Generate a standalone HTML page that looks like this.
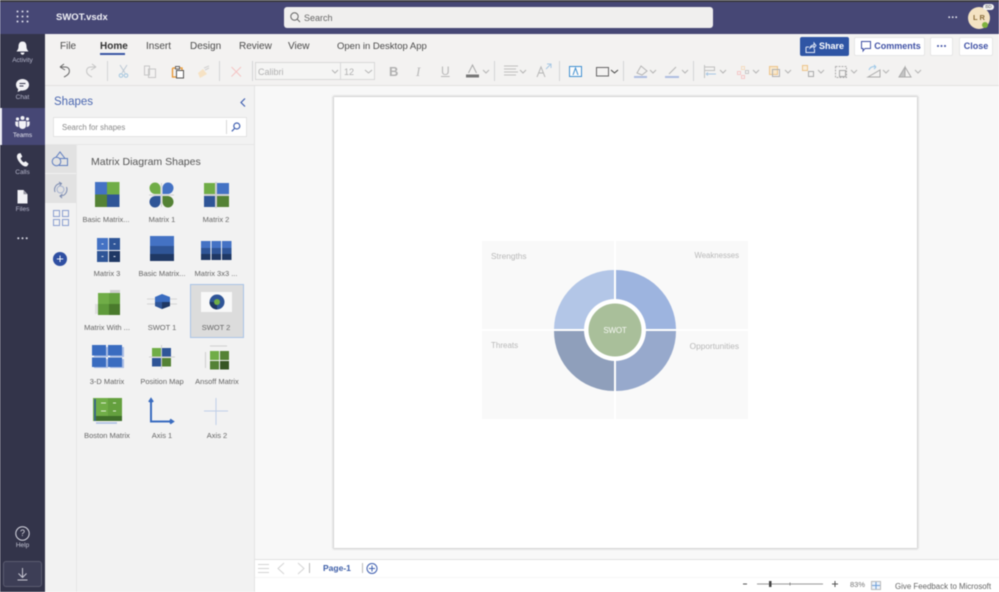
<!DOCTYPE html>
<html><head><meta charset="utf-8">
<style>
html,body{margin:0;padding:0;width:999px;height:592px;overflow:hidden;background:#fff}
body{font-family:"Liberation Sans",sans-serif;-webkit-font-smoothing:antialiased}
#w{position:relative;width:999px;height:592px;overflow:hidden;filter:blur(.4px)}
.a{position:absolute}
.t{position:absolute;white-space:nowrap;line-height:1}
.r{position:absolute;width:45px;left:0;text-align:center;color:#b5b6cb;font-size:6.5px;white-space:nowrap}
.tab{position:absolute;top:41px;font-size:10px;color:#4a4a4a;line-height:12px;white-space:nowrap}
.lab{position:absolute;width:60px;text-align:center;font-size:7.5px;color:#666;white-space:nowrap;line-height:9px}
.btn{position:absolute;top:37px;height:19px;background:#fff;border:1px solid #e6e6e6;border-radius:2px;box-sizing:border-box;color:#3f51a5;font-size:9px;line-height:17px;text-align:center;font-weight:bold}
svg{position:absolute;overflow:visible}
</style></head><body><div id="w">
<!-- top bar -->
<div class="a" style="left:0;top:0;width:999px;height:34px;background:#464775"></div>
<div class="a" style="left:0;top:0;width:999px;height:2px;background:#3c3c40"></div>
<svg style="left:16px;top:10px" width="14" height="14" fill="#dcdcea"><circle cx="1.500" cy="1.500" r="1"/><circle cx="6.500" cy="1.500" r="1"/><circle cx="11.500" cy="1.500" r="1"/><circle cx="1.500" cy="6.500" r="1"/><circle cx="6.500" cy="6.500" r="1"/><circle cx="11.500" cy="6.500" r="1"/><circle cx="1.500" cy="11.500" r="1"/><circle cx="6.500" cy="11.500" r="1"/><circle cx="11.500" cy="11.500" r="1"/></svg>
<div class="t" style="left:56px;top:13px;font-size:9.500px;font-weight:bold;color:#f0f0f6">SWOT.vsdx</div>
<div class="a" style="left:284px;top:7px;width:429px;height:21px;background:#f0efee;border-radius:3px"></div>
<svg style="left:290px;top:12px" width="11" height="11" fill="none" stroke="#666" stroke-width="1"><circle cx="4.500" cy="4.500" r="3.700"/><path d="M7.200 7.200L10 10"/></svg>
<div class="t" style="left:304px;top:14px;font-size:9px;color:#666">Search</div>
<svg style="left:948px;top:16px" width="10" height="3" fill="#e8e8f0"><circle cx="1.200" cy="1.200" r=".9"/><circle cx="4.700" cy="1.200" r=".9"/><circle cx="8.200" cy="1.200" r=".9"/></svg>
<div class="a" style="left:968px;top:7px;width:22px;height:22px;border-radius:50%;background:#f4e3c3;color:#8a6d3b;font-size:7.500px;line-height:22px;text-align:center;font-weight:bold">L R</div>
<div class="a" style="left:983px;top:4px;width:11px;height:6px;border-radius:3px;background:#f4f4f4;color:#555;font-size:4.500px;line-height:6px;text-align:center">BD</div>
<div class="a" style="left:982px;top:22px;width:6px;height:6px;border-radius:50%;background:#7fb23e"></div>

<!-- left rail -->
<div class="a" style="left:0;top:34px;width:45px;height:558px;background:#33344a"></div>
<div class="a" style="left:0;top:108px;width:45px;height:37px;background:#464775"></div>
<div class="a" style="left:0;top:108px;width:2px;height:37px;background:#e8e8f2"></div>
<svg style="left:15px;top:41px" width="15" height="15" fill="#f2f2f6"><path d="M7.500 0.500C4.500 0.500 3.500 3 3.500 5.500C3.500 8 2.500 9 1.500 10.500H13.500C12.500 9 11.500 8 11.500 5.500C11.500 3 10.500 0.500 7.500 0.500Z"/><path d="M5.500 11.500H9.500C9.300 13 8.500 13.800 7.500 13.800S5.700 13 5.500 11.500Z"/></svg>
<div class="r" style="top:57px">Activity</div>
<svg style="left:15px;top:78px" width="15" height="15"><path fill="#f2f2f6" d="M7.500 1C3.800 1 1 3.500 1 6.800C1 8.600 1.900 10.100 3.200 11.200L2.600 14L6 12.500C6.500 12.600 7 12.600 7.500 12.600C11.200 12.600 14 10.100 14 6.800C14 3.500 11.200 1 7.500 1Z"/><path stroke="#33344a" stroke-width="1" d="M4.500 5.500H10.500M4.500 8H8.500"/></svg>
<div class="r" style="top:94px">Chat</div>
<svg style="left:15px;top:116px" width="15" height="13" fill="#f2f2f6"><circle cx="7.500" cy="2" r="2"/><circle cx="2.500" cy="3" r="1.600"/><circle cx="12.500" cy="3" r="1.600"/><path d="M4 5H11V9.500C11 11.500 9.500 13 7.500 13S4 11.500 4 9.500Z"/><path d="M0.300 5.500H3.200V9.500C3.200 10 3.300 10.500 3.400 11C1.500 11 0.300 9.500 0.300 8Z"/><path d="M14.700 5.500H11.800V9.500C11.800 10 11.700 10.500 11.600 11C13.500 11 14.700 9.500 14.700 8Z"/></svg>
<div class="r" style="top:132px;color:#e6e6f0">Teams</div>
<svg style="left:16px;top:153px" width="13" height="14"><path fill="#f2f2f6" d="M2 .8L4.500 0L6.300 3.600L4.600 5.200C5 6.800 6.300 8.500 7.800 9.400L9.600 8.200L12.600 10.800L11.300 13C10 14 7.500 13.600 5 11S.5 5 1 2.500Z"/></svg>
<div class="r" style="top:169px">Calls</div>
<svg style="left:17px;top:190px" width="11" height="14"><path fill="#f2f2f6" d="M.5 0H6.500L10.500 4.200V13.500H.5Z"/><path fill="#33344a" d="M6.500 .5V4.200H10.200Z" opacity=".5"/></svg>
<div class="r" style="top:206px">Files</div>
<svg style="left:17px;top:237px" width="11" height="3" fill="#dcdce6"><circle cx="1.300" cy="1.300" r="1"/><circle cx="5.500" cy="1.300" r="1"/><circle cx="9.700" cy="1.300" r="1"/></svg>
<svg style="left:15px;top:526px" width="15" height="15" fill="none" stroke="#d8d8e2" stroke-width="1"><circle cx="7.500" cy="7.500" r="6.700"/></svg>
<div class="t" style="left:15px;top:529px;width:15px;text-align:center;font-size:9px;color:#d8d8e2">?</div>
<div class="r" style="top:542px;color:#c4c5d4">Help</div>
<div class="a" style="left:3px;top:561px;width:39px;height:26px;box-sizing:border-box;background:#3d3e56;border:1px solid #5a5b70;border-radius:3px"></div>
<svg style="left:17px;top:568px" width="11" height="13" fill="none" stroke="#c9c9d4" stroke-width="1"><path d="M5.500 0V9M1.500 5.500L5.500 9.500L9.500 5.500M.5 12H10.500"/></svg>

<!-- ribbon -->
<div class="a" style="left:45px;top:34px;width:954px;height:52px;background:#f3f2f1"></div>
<div class="a" style="left:45px;top:85px;width:954px;height:1px;background:#e2e1e0"></div>
<div class="tab" style="left:60px">File</div>
<div class="tab" style="left:100px;font-weight:bold;color:#333">Home</div>
<div class="a" style="left:100px;top:53px;width:25px;height:2px;background:#3a55a5"></div>
<div class="tab" style="left:146px">Insert</div>
<div class="tab" style="left:190px">Design</div>
<div class="tab" style="left:239px">Review</div>
<div class="tab" style="left:288px">View</div>
<div class="tab" style="left:337px;font-size:9.500px">Open in Desktop App</div>

<div class="btn" style="left:800px;width:49px;background:#2f55a4;border-color:#2f55a4;color:#fff;padding-left:14px">Share</div>
<svg style="left:805px;top:42px" width="11" height="11" fill="none" stroke="#dfe6f5" stroke-width="1"><path d="M1 5H4M1 5V10.500H9.500V7M5 6C5.500 3.800 7 3 9 3V1L11 3.500L9 6V4.500C7.500 4.500 6 5 5 6Z"/></svg>
<div class="btn" style="left:854px;width:71px;padding-left:16px">Comments</div>
<svg style="left:861px;top:41px" width="10" height="11" fill="none" stroke="#3f51a5" stroke-width="1"><path d="M.5 .5H9.500V7.500H4L2 10V7.500H.5Z"/></svg>
<div class="btn" style="left:930px;width:23px"></div>
<svg style="left:937px;top:45px" width="9" height="2" fill="#3f51a5"><circle cx="1" cy="1" r="1"/><circle cx="4.500" cy="1" r="1"/><circle cx="8" cy="1" r="1"/></svg>
<div class="btn" style="left:959px;width:34px">Close</div>

<!-- toolbar icons -->
<svg style="left:0;top:0" width="999" height="86" fill="none" stroke-width="1">
<path stroke="#666" d="M60 67L64 64M60 67L65 70M60 67H65C69 67 70 70 69 73C68 75 66 76 64 77"/>
<path stroke="#c4c4c4" d="M96 67L92 64M96 67L91 70M96 67H91C87 67 86 70 87 73C88 75 90 76 92 77"/>
<path stroke="#d5d5d5" d="M107.500 61V81M219.500 61V81M252.500 61V81M494.500 61V81M559.500 61V81M623.500 61V81M693.500 61V81"/>
<path stroke="#bcc8d4" d="M120 65L125 73M127 65L122 73"/><circle stroke="#a0c4de" cx="121" cy="75.500" r="1.800"/><circle stroke="#a0c4de" cx="126" cy="75.500" r="1.800"/>
<path stroke="#c6c6c6" d="M144.500 66H149.500V75H144.500ZM148.500 69H155.500V77.500H148.500Z" fill="#f3f2f1"/>
<path stroke="#e8952e" stroke-width="1.300" d="M172.500 68H175M180 68H182V75M172.500 68V77H177"/><rect stroke="#555" x="176.500" y="70.500" width="7" height="7.500" fill="#fff"/><path stroke="#666" d="M175.500 66.500H179.500V69H175.500Z"/>
<path stroke="#d0d0d0" d="M204 68L209 66M205 70L209 68"/><path fill="#f6e2c4" d="M198 73L203 69L207 74L200 78Z"/>
<path stroke="#f4c4c4" d="M231.500 67L241 76.500M241 67L231.500 76.500"/>
<rect stroke="#d8d8d8" x="255.500" y="62.500" width="85" height="17" fill="#f5f5f4"/>
<rect stroke="#d8d8d8" x="340.500" y="62.500" width="34" height="17" fill="#f5f5f4"/>
<path stroke="#b5b5b5" d="M332 70L335 73L338 70M365 70L368.500 73L372 70"/>
<path stroke="#b5b5b5" d="M483 70L486 73L489 70M520 70L523 73L526 70M650 70L653 73L656 70M682 70L685 73L688 70M720 70L723 73L726 70M753 70L756 73L759 70M785 70L788 73L791 70M818 70L821 73L824 70M851 70L854 73L857 70M883 70L886 73L889 70M915 70L918 73L921 70"/>
<path stroke="#444" d="M611 70L614.500 73L618 70"/>
<path stroke="#c0c0c0" d="M504 66H518M504 69H516M504 72H518M504 75H516"/>
<path stroke="#b5b5b5" d="M537 77L541 67L545 77M538.500 73H543.500"/><path stroke="#a8c8e4" d="M547 64H551V68M551 64L546 69"/>
<rect stroke="#3f8fd0" x="569.500" y="66.500" width="12" height="10" fill="#fbfbfb"/><path stroke="#3f8fd0" d="M573 75L575.500 68L578 75"/>
<rect stroke="#666" x="596.500" y="67.500" width="12" height="8.500"/>
<path stroke="#b5b5b5" d="M637 73L641 66L647 71L642 75Z"/><rect x="634" y="76" width="13" height="2" fill="#aebde0"/>
<path stroke="#b5b5b5" d="M669 74L676 67"/><rect x="665" y="76" width="14" height="2" fill="#aebde0"/>
<path stroke="#c0c0c0" d="M704.500 65V78M704.500 67H714.500V70.500H704.500"/><path stroke="#a8c8e4" d="M706 74H716M706 74L708 72.500M706 74L708 75.500"/>
<rect stroke="#f4c8c8" x="737.500" y="71.500" width="3" height="3"/><rect stroke="#f4dcc0" x="741.500" y="66.500" width="3" height="3"/><rect stroke="#c8c8c8" x="745.500" y="70.500" width="3" height="3"/><rect stroke="#f4c8c8" x="741.500" y="75.500" width="3" height="3"/>
<rect stroke="#ecc48a" x="769.500" y="66.500" width="8" height="8" fill="#f8e8cc"/><rect stroke="#b0b0b0" x="772.500" y="69.500" width="7" height="7"/>
<rect stroke="#ecc48a" x="802.500" y="65.500" width="5" height="5" fill="#f8ecd8"/><rect stroke="#aaa" x="808.500" y="71.500" width="5" height="5"/>
<rect stroke="#b0b0b0" stroke-dasharray="2 1" x="835.500" y="66.500" width="11" height="11"/><rect stroke="#aaa" x="839.500" y="70.500" width="6" height="6"/>
<path stroke="#aaa" d="M868 77L880 70V77Z"/><path stroke="#9cc8e8" d="M869 70C870 67 873 66 876 67M876 67L874 65M876 67L874 69"/>
<path fill="#c4c4c4" stroke="#aaa" d="M905 67L899 77H905Z"/><path stroke="#aaa" d="M905 67L911 77H905"/>
<rect x="466" y="74.500" width="13" height="3" fill="#777"/><path stroke="#aaa" d="M468.500 73L472.500 65L476.500 73"/>
</svg>
<div class="t" style="left:258px;top:68px;font-size:9px;color:#b0b0b0">Calibri</div>
<div class="t" style="left:344px;top:68px;font-size:9px;color:#b0b0b0">12</div>
<div class="t" style="left:389px;top:65px;font-size:13px;font-weight:bold;color:#b0b0b0">B</div>
<div class="t" style="left:416px;top:65px;font-size:13px;font-style:italic;font-family:'Liberation Serif',serif;color:#b8b8b8">I</div>
<div class="t" style="left:441px;top:65px;font-size:12px;text-decoration:underline;color:#b8b8b8">U</div>

<!-- shapes panel -->
<div class="a" style="left:45px;top:86px;width:209px;height:506px;background:#f2f2f2"></div>
<div class="a" style="left:254px;top:86px;width:1px;height:506px;background:#e4e4e4"></div>
<div class="t" style="left:54px;top:97px;font-size:11.500px;color:#4a67b0">Shapes</div>
<svg style="left:240px;top:98px" width="6" height="9" fill="none" stroke="#3f5fb0" stroke-width="1.200"><path d="M5 .5L1 4.500L5 8.500"/></svg>
<div class="a" style="left:53px;top:117px;width:194px;height:20px;box-sizing:border-box;background:#fff;border:1px solid #e4e4e4"></div>
<div class="t" style="left:62px;top:124px;font-size:7.800px;color:#888">Search for shapes</div>
<div class="a" style="left:226px;top:120px;width:1px;height:14px;background:#d8d8d8"></div>
<svg style="left:231px;top:122px" width="10" height="10" fill="none" stroke="#3f5fb0" stroke-width="1.200"><circle cx="5.800" cy="4" r="3"/><path d="M3.500 6.500L.8 9.300"/></svg>
<div class="a" style="left:45px;top:144px;width:209px;height:1px;background:#e6e6e6"></div>
<div class="a" style="left:76px;top:144px;width:1px;height:448px;background:#e6e6e6"></div>
<div class="a" style="left:45px;top:145px;width:31px;height:28px;background:#e2e2e2"></div>
<div class="a" style="left:45px;top:174px;width:31px;height:29px;background:#e2e2e2"></div>
<svg style="left:0;top:0" width="80" height="240" fill="none" stroke="#5f7ec0" stroke-width="1">
<path d="M55 158.500L60 152L65 158.500Z"/><rect x="59.500" y="158.500" width="8" height="7"/><circle cx="56.500" cy="161.500" r="4.300" fill="#e2e2e2"/>
<path stroke="#7a8ab0" d="M55 192C53.500 188 56 183.500 61 183.500M66.500 187C68 191 65.500 196 60.500 196M59 182L61.500 183.500L59.500 186M62.500 194L60 196L62 198"/><circle cx="60.500" cy="189.500" r="3.500" stroke="#a8b4d0"/>
<path stroke="#8a9ed0" d="M53.500 210.500H59.500V216.500H53.500ZM62.500 210.500H68.500V216.500H62.500ZM53.500 219.500H59.500V225.500H53.500ZM62.500 219.500H68.500V225.500H62.500Z"/>
</svg>
<div class="a" style="left:53px;top:252px;width:14px;height:14px;border-radius:50%;background:#2f4fa2;color:#fff;font-size:13px;line-height:13px;text-align:center">+</div>
<div class="t" style="left:91px;top:157px;font-size:10.500px;color:#555">Matrix Diagram Shapes</div>

<!-- selected -->
<div class="a" style="left:190px;top:284px;width:54px;height:54px;box-sizing:border-box;background:#dcdcdc;border:1px solid #a9c4e6"></div>

<svg style="left:0;top:0" width="260" height="450">
<rect x="95" y="182" width="12" height="12.500" fill="#4472c4"/><rect x="107" y="182" width="12.500" height="12.500" fill="#70ad47"/><rect x="95" y="194.500" width="12" height="12.500" fill="#548235"/><rect x="107" y="194.500" width="12.500" height="12.500" fill="#2f5597"/>
<path stroke="#d0d0d0" d="M149 195H174M161.500 183V207"/>
<path fill="#70ad47" d="M160.500 194V188A5.500 5.500 0 0 0 149.500 188A6 6 0 0 0 155 194Z"/>
<path fill="#4472c4" d="M162.500 194V188A5.500 5.500 0 0 1 173.500 188A6 6 0 0 1 168 194Z"/>
<path fill="#2f5597" d="M160.500 196V202A5.500 5.500 0 0 1 149.500 202A6 6 0 0 1 155 196Z"/>
<path fill="#548235" d="M162.500 196V202A5.500 5.500 0 0 0 173.500 202A6 6 0 0 0 168 196Z"/>
<path stroke="#d0d0d0" stroke-width="2" d="M204 195H229M216 182V208"/>
<rect x="204" y="183" width="11" height="11" fill="#70ad47"/><rect x="217" y="183" width="12" height="11" fill="#4472c4"/><rect x="204" y="196" width="11" height="11" fill="#2f5597"/><rect x="217" y="196" width="12" height="11" fill="#548235"/>
<rect x="97" y="238" width="11" height="12" fill="#4472c4"/><rect x="109" y="238" width="11" height="12" fill="#2f5597"/><rect x="97" y="251" width="11" height="11" fill="#2f5597"/><rect x="109" y="251" width="11" height="11" fill="#1f3864"/>
<path stroke="#dfe6f5" d="M101.500 244H103.500M113.500 244H115.500M101.500 256.500H103.500M113.500 256.500H115.500"/>
<rect x="150" y="236" width="24" height="10" fill="#4472c4"/><rect x="150" y="246" width="24" height="8" fill="#2f5597"/><rect x="150" y="254" width="24" height="7" fill="#1f3864"/>
<g><rect x="201" y="241" width="9.500" height="7" fill="#4472c4"/><rect x="201" y="248" width="9.500" height="6" fill="#2f5597"/><rect x="201" y="254" width="9.500" height="6" fill="#1f3864"/><rect x="211.500" y="241" width="9.500" height="7" fill="#4472c4"/><rect x="211.500" y="248" width="9.500" height="6" fill="#2f5597"/><rect x="211.500" y="254" width="9.500" height="6" fill="#1f3864"/><rect x="222" y="241" width="9.500" height="7" fill="#4472c4"/><rect x="222" y="248" width="9.500" height="6" fill="#2f5597"/><rect x="222" y="254" width="9.500" height="6" fill="#1f3864"/></g>
<rect x="95" y="304" width="4" height="10" fill="#ddd"/><rect x="110" y="290" width="10" height="3" fill="#d0d0d0"/>
<rect x="98" y="293" width="11" height="11" fill="#70ad47"/><rect x="109" y="293" width="11" height="11" fill="#64a03e"/><rect x="98" y="304" width="11" height="11" fill="#5f9a3b"/><rect x="109" y="304" width="11" height="11" fill="#4a7a2c"/>
<path stroke="#d4d4d4" stroke-width="1" d="M147 299H177M147 304H177"/><path fill="#3a6cc0" d="M155 297L162 294L170 297V306L162 309L155 306Z"/><path fill="#2f5597" d="M155 302H162V309L155 306Z"/><path fill="#1f3864" d="M162 302H170V306L162 309Z"/>
<rect x="201" y="292" width="31" height="20" fill="#f8f8f8"/><circle cx="217" cy="302" r="7.500" fill="#2f5597"/><path fill="#1f3864" d="M217 302V309.500A7.500 7.500 0 0 1 209.500 302Z"/><circle cx="217" cy="302" r="3" fill="#70ad47"/>
<rect x="94" y="347" width="14" height="10" fill="#a8bce4"/><rect x="110" y="347" width="14" height="10" fill="#a8bce4"/><rect x="94" y="359" width="14" height="9" fill="#a8bce4"/><rect x="110" y="359" width="14" height="9" fill="#a8bce4"/>
<rect x="92" y="345" width="14" height="10.500" fill="#3a6cc0"/><rect x="108" y="345" width="14" height="10.500" fill="#3a6cc0"/><rect x="92" y="357.500" width="14" height="9.500" fill="#3a6cc0"/><rect x="108" y="357.500" width="14" height="9.500" fill="#3a6cc0"/>
<path stroke="#d0d0d0" d="M161.500 345V369M149 357H175"/><rect x="152" y="348" width="9" height="8.500" fill="#70ad47"/><rect x="162" y="348" width="9" height="8.500" fill="#2f5597"/><rect x="152" y="358" width="9" height="8.500" fill="#2f5597"/><rect x="162" y="358" width="9" height="8.500" fill="#548235"/>
<path stroke="#cfcfcf" d="M205.500 352V368M210 346H227"/><rect x="210" y="351" width="9" height="9" fill="#70ad47"/><rect x="220" y="351" width="9" height="9" fill="#548235"/><rect x="210" y="361" width="9" height="8.500" fill="#548235"/><rect x="220" y="361" width="9" height="8.500" fill="#375623"/>
<rect x="93" y="398" width="29" height="23" fill="#70ad47"/><rect x="108" y="398" width="14" height="23" fill="#64a03e"/><rect x="96" y="416" width="26" height="5" fill="#3f6e2a"/><path stroke="#2f5597" stroke-width="1.500" d="M95 399V421"/><path stroke="#a8bce4" stroke-width="1.500" d="M96 423H117"/><path stroke="#dceccf" d="M101 403H106M113 403H116M101 411H106M113 411H116"/>
<path fill="none" stroke="#3a6cc0" stroke-width="2" d="M151 400V421.500H172M149 402L151 399L153 402M170 419.500L173 421.500L170 423.500"/>
<path stroke="#c0cfe8" stroke-width="1" d="M216 398V425M204 411H228"/>
</svg>
<div class="lab" style="left:76px;top:215px">Basic Matrix...</div>
<div class="lab" style="left:132px;top:215px">Matrix 1</div>
<div class="lab" style="left:186px;top:215px">Matrix 2</div>
<div class="lab" style="left:77px;top:269px">Matrix 3</div>
<div class="lab" style="left:132px;top:269px">Basic Matrix...</div>
<div class="lab" style="left:186px;top:269px">Matrix 3x3 ...</div>
<div class="lab" style="left:77px;top:323px">Matrix With ...</div>
<div class="lab" style="left:132px;top:323px">SWOT 1</div>
<div class="lab" style="left:186px;top:323px">SWOT 2</div>
<div class="lab" style="left:77px;top:377px">3-D Matrix</div>
<div class="lab" style="left:132px;top:377px">Position Map</div>
<div class="lab" style="left:187px;top:377px">Ansoff Matrix</div>
<div class="lab" style="left:77px;top:431px">Boston Matrix</div>
<div class="lab" style="left:132px;top:431px">Axis 1</div>
<div class="lab" style="left:187px;top:431px">Axis 2</div>

<!-- canvas -->
<div class="a" style="left:255px;top:86px;width:744px;height:473px;background:#f8f8f8"></div>
<div class="a" style="left:334px;top:97px;width:583px;height:451px;background:#fff;box-shadow:0 0 2px 1px #c8c8c8"></div>
<svg style="left:482px;top:241px" width="266" height="178">
<rect x="0" y="0" width="132" height="88" fill="#f9f9f9"/><rect x="134" y="0" width="132" height="88" fill="#f9f9f9"/><rect x="0" y="90" width="132" height="88" fill="#f9f9f9"/><rect x="134" y="90" width="132" height="88" fill="#f9f9f9"/>
<path fill="#b3c6e7" d="M132 29A60 60 0 0 0 72 88H132Z"/>
<path fill="#9db4df" d="M134 29A60 60 0 0 1 194 88H134Z"/>
<path fill="#8f9fbb" d="M72 90A60 60 0 0 0 132 150V90Z"/>
<path fill="#97a9cc" d="M194 90A60 60 0 0 1 134 150V90Z"/>
<circle cx="133" cy="89" r="31" fill="#fff"/>
<circle cx="133" cy="89" r="26.500" fill="#a9bf9a"/>
</svg>
<div class="t" style="left:590px;top:327px;width:50px;text-align:center;font-size:8px;color:#f6f8f3;letter-spacing:-.2px">SWOT</div>
<div class="t" style="left:491px;top:252px;font-size:8.300px;color:#b8b8b8">Strengths</div>
<div class="t" style="left:680px;top:252px;width:59px;text-align:right;font-size:7.800px;color:#b8b8b8">Weaknesses</div>
<div class="t" style="left:491px;top:342px;font-size:8px;color:#b8b8b8">Threats</div>
<div class="t" style="left:680px;top:342px;width:59px;text-align:right;font-size:8.300px;color:#b8b8b8">Opportunities</div>

<!-- bottom bars -->
<div class="a" style="left:255px;top:559px;width:744px;height:33px;background:#fff"></div>
<div class="a" style="left:255px;top:559px;width:744px;height:1px;background:#e2e2e2"></div>
<div class="a" style="left:255px;top:577px;width:744px;height:1px;background:#f6f6f6"></div>
<svg style="left:0;top:0" width="999" height="592" fill="none" stroke-width="1">
<path stroke="#d4d4d4" d="M258 564.500H269M258 568.500H269M258 572.500H269M284 563L278 568.500L284 574M298 563L304 568.500L298 574"/>
<path stroke="#bbb" d="M309.500 563V573M362.500 563V573"/>
<circle stroke="#3f5fb0" cx="372" cy="568.500" r="5"/><path stroke="#3f5fb0" d="M369 568.500H375M372 565.500V571.500"/>
<path stroke="#555" d="M743 584H747M832 584H838M835 581V587"/>
<path stroke="#999" d="M757 584H823"/><rect x="769" y="581" width="2.500" height="6" fill="#444"/><path stroke="#888" d="M790 582.500V585.500"/>
<rect stroke="#bbb" x="871.500" y="581.500" width="9" height="8" fill="#eaf1fa"/><path stroke="#6f9fd8" d="M876 582V589M872 585.500H880"/>
</svg>
<div class="t" style="left:323px;top:564px;font-size:8.500px;font-weight:bold;color:#3d5ea8">Page-1</div>
<div class="t" style="left:850px;top:581px;font-size:7.500px;color:#777">83%</div>
<div class="t" style="left:895px;top:583px;font-size:7.900px;color:#666">Give Feedback to Microsoft</div>
</div></body></html>
